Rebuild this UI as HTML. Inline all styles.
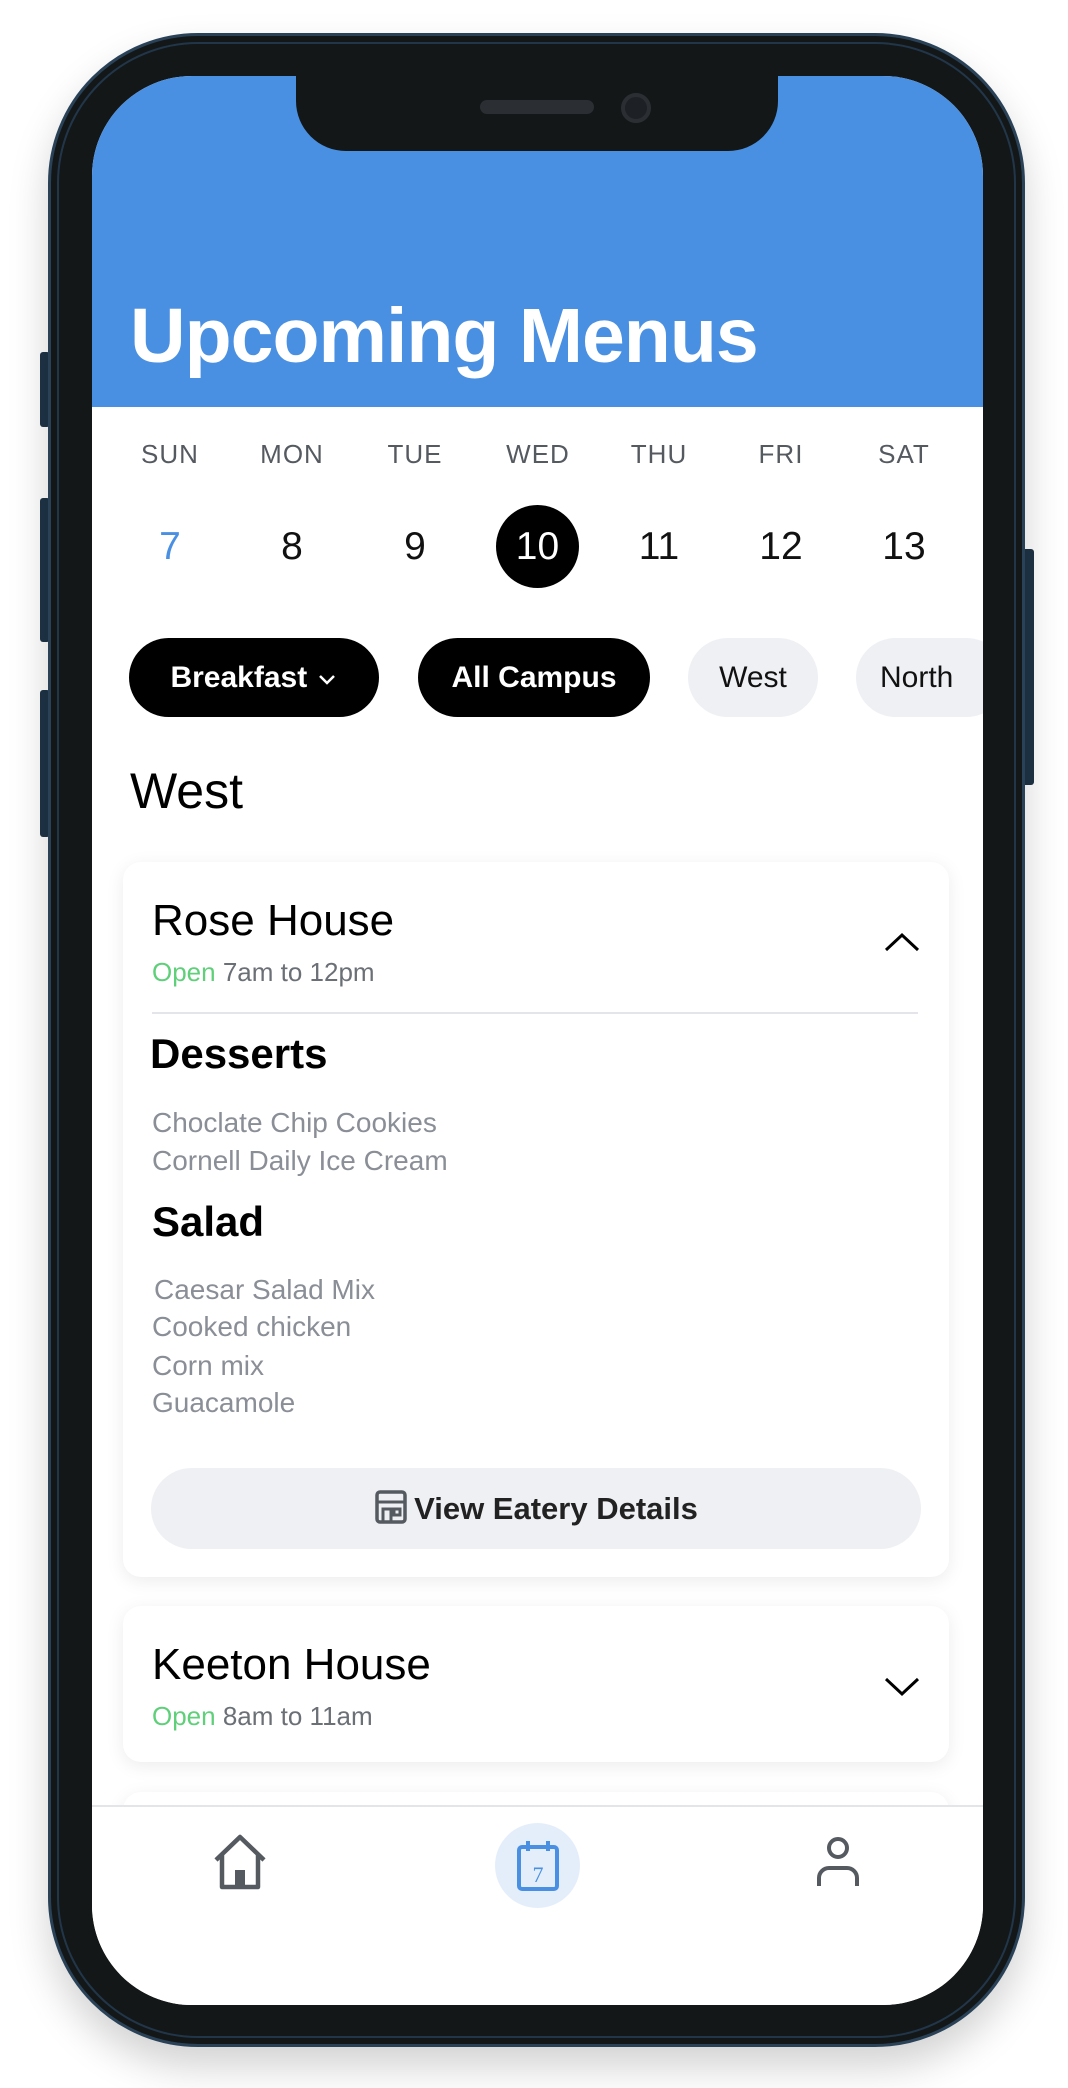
<!DOCTYPE html>
<html><head><meta charset="utf-8"><style>
*{margin:0;padding:0;box-sizing:border-box}
body{width:1068px;height:2088px;background:#fff;position:relative;overflow:hidden;font-family:"Liberation Sans",sans-serif}
.a{position:absolute}
.frame{left:48px;top:33px;width:977px;height:2014px;border-radius:150px;background:#131718;border:3px solid #2a4258;box-shadow:0 20px 40px rgba(0,0,0,.18),inset 0 0 0 6px #131718,inset 0 0 0 8px #22364a}
.screen{left:92px;top:76px;width:891px;height:1929px;border-radius:100px;background:#fff;overflow:hidden}
.blue{left:0;top:0;width:891px;height:331px;background:#4a90e2}
.notch{left:204px;top:-10px;width:482px;height:85px;background:#131718;border-radius:0 0 50px 50px}
.btn{background:#1e3447;border-radius:3px}
.day{width:100px;text-align:center;font-size:26px;color:#555a61;letter-spacing:1px;top:363px}
.num{width:100px;text-align:center;font-size:39px;color:#111;top:449px}
.chip{top:562px;height:79px;border-radius:40px;font-size:30px;font-weight:bold;line-height:79px;text-align:center}
.card{left:31px;width:826px;background:#fff;border-radius:18px;box-shadow:0 4px 18px rgba(0,0,0,.08)}
.item{left:60px;font-size:28px;color:#8a8e96}
</style></head><body>
<div class="a btn" style="left:40px;top:352px;width:10px;height:75px"></div>
<div class="a btn" style="left:40px;top:498px;width:10px;height:144px"></div>
<div class="a btn" style="left:40px;top:690px;width:10px;height:147px"></div>
<div class="a btn" style="left:1022px;top:549px;width:12px;height:236px"></div>
<div class="a frame"></div>
<div class="a screen">
 <div class="a blue"></div>
 <div class="a notch"></div>
 <div class="a" style="left:388px;top:24px;width:114px;height:14px;border-radius:7px;background:#2b2f33"></div>
 <div class="a" style="left:529px;top:17px;width:30px;height:30px;border-radius:50%;background:#1d2125;border:4px solid #2b2f33"></div>
 <div class="a" style="left:38px;top:216px;font-size:77px;font-weight:bold;color:#fff;letter-spacing:-1px">Upcoming Menus</div>
 <div class="a day" style="left:28px">SUN</div>
 <div class="a day" style="left:150px">MON</div>
 <div class="a day" style="left:273px">TUE</div>
 <div class="a day" style="left:396px">WED</div>
 <div class="a day" style="left:517px">THU</div>
 <div class="a day" style="left:639px">FRI</div>
 <div class="a day" style="left:762px">SAT</div>
 <div class="a num" style="left:28px;color:#4a90e2">7</div>
 <div class="a num" style="left:150px">8</div>
 <div class="a num" style="left:273px">9</div>
 <div class="a" style="left:404px;top:429px;width:83px;height:83px;border-radius:50%;background:#000;color:#fff;font-size:39px;text-align:center;line-height:83px">10</div>
 <div class="a num" style="left:517px">11</div>
 <div class="a num" style="left:639px">12</div>
 <div class="a num" style="left:762px">13</div>
 <div class="a chip" style="left:37px;width:250px;background:#000;color:#fff">Breakfast <svg width="22" height="14" viewBox="0 0 22 14" style="vertical-align:middle"><path d="M4 4l7 7 7-7" fill="none" stroke="#fff" stroke-width="2.5"/></svg></div>
 <div class="a chip" style="left:326px;width:232px;background:#000;color:#fff">All Campus</div>
 <div class="a chip" style="left:596px;width:130px;background:#eff0f4;color:#111;font-weight:normal">West</div>
 <div class="a chip" style="left:764px;width:150px;background:#eff0f4;color:#111;font-weight:normal;text-align:left;padding-left:24px">North</div>
 <div class="a" style="left:38px;top:686px;font-size:50px;color:#000">West</div>
 <div class="a card" style="top:786px;height:715px">
  <div class="a" style="left:29px;top:34px;font-size:44px;color:#000">Rose House</div>
  <div class="a" style="left:29px;top:95px;font-size:26px;color:#6b6f76"><span style="color:#5fcf7a">Open</span> 7am to 12pm</div>
  <svg class="a" style="left:758px;top:68px" width="42" height="26" viewBox="0 0 42 26"><path d="M5 20L21 5l16 15" fill="none" stroke="#000" stroke-width="3"/></svg>
  <div class="a" style="left:29px;top:150px;width:766px;height:2px;background:#e3e5e9"></div>
  <div class="a" style="left:27px;top:168px;font-size:42px;font-weight:bold;color:#000">Desserts</div>
  <div class="a item" style="left:29px;top:245px">Choclate Chip Cookies</div>
  <div class="a item" style="left:29px;top:283px">Cornell Daily Ice Cream</div>
  <div class="a" style="left:29px;top:336px;font-size:42px;font-weight:bold;color:#000">Salad</div>
  <div class="a item" style="left:31px;top:412px">Caesar Salad Mix</div>
  <div class="a item" style="left:29px;top:449px">Cooked chicken</div>
  <div class="a item" style="left:29px;top:488px">Corn mix</div>
  <div class="a item" style="left:29px;top:525px">Guacamole</div>
  <div class="a" style="left:28px;top:606px;width:770px;height:81px;border-radius:41px;background:#eff0f4;text-align:center;line-height:81px;font-size:31px;font-weight:bold;color:#222">
   <svg width="34" height="36" viewBox="0 0 34 36" style="vertical-align:-6px;margin-right:6px"><rect x="3" y="3" width="28" height="30" rx="3" fill="none" stroke="#555a61" stroke-width="3.5"/><path d="M3 13h28M9 33V20h8v13M20 20h6v6h-6z" fill="none" stroke="#555a61" stroke-width="3"/></svg>View Eatery Details</div>
 </div>
 <div class="a card" style="top:1530px;height:156px">
  <div class="a" style="left:29px;top:34px;font-size:44px;color:#000">Keeton House</div>
  <div class="a" style="left:29px;top:95px;font-size:26px;color:#6b6f76"><span style="color:#5fcf7a">Open</span> 8am to 11am</div>
  <svg class="a" style="left:758px;top:68px" width="42" height="26" viewBox="0 0 42 26"><path d="M5 5l16 15L37 5" fill="none" stroke="#000" stroke-width="3"/></svg>
 </div>
 <div class="a card" style="top:1716px;height:60px"></div>
 <div class="a" style="left:0;top:1729px;width:891px;height:220px;background:#fff;border-top:2px solid #e3e5e9"></div>
 <svg class="a" style="left:118px;top:1756px" width="60" height="62" viewBox="0 0 60 62"><path d="M6 28L30 5l24 23M12 22v33h36V22" fill="none" stroke="#555a61" stroke-width="4.5" stroke-linejoin="round"/><rect x="25" y="38" width="10" height="17" fill="#555a61"/></svg>
 <div class="a" style="left:403px;top:1747px;width:85px;height:85px;border-radius:50%;background:#e4eefa"></div>
 <svg class="a" style="left:421px;top:1763px" width="50" height="56" viewBox="0 0 50 56"><rect x="6" y="8" width="38" height="42" rx="3" fill="none" stroke="#4a90e2" stroke-width="4"/><path d="M15 2v10M35 2v10" stroke="#4a90e2" stroke-width="4"/><text x="25" y="43" text-anchor="middle" font-family="Liberation Serif,serif" font-size="22" fill="#4a90e2">7</text></svg>
 <svg class="a" style="left:721px;top:1758px" width="50" height="56" viewBox="0 0 50 56"><circle cx="25" cy="14" r="9" fill="none" stroke="#555a61" stroke-width="4"/><path d="M6 52V44a10 10 0 0 1 10-10h18a10 10 0 0 1 10 10v8" fill="none" stroke="#555a61" stroke-width="4"/></svg>
</div>
</body></html>
